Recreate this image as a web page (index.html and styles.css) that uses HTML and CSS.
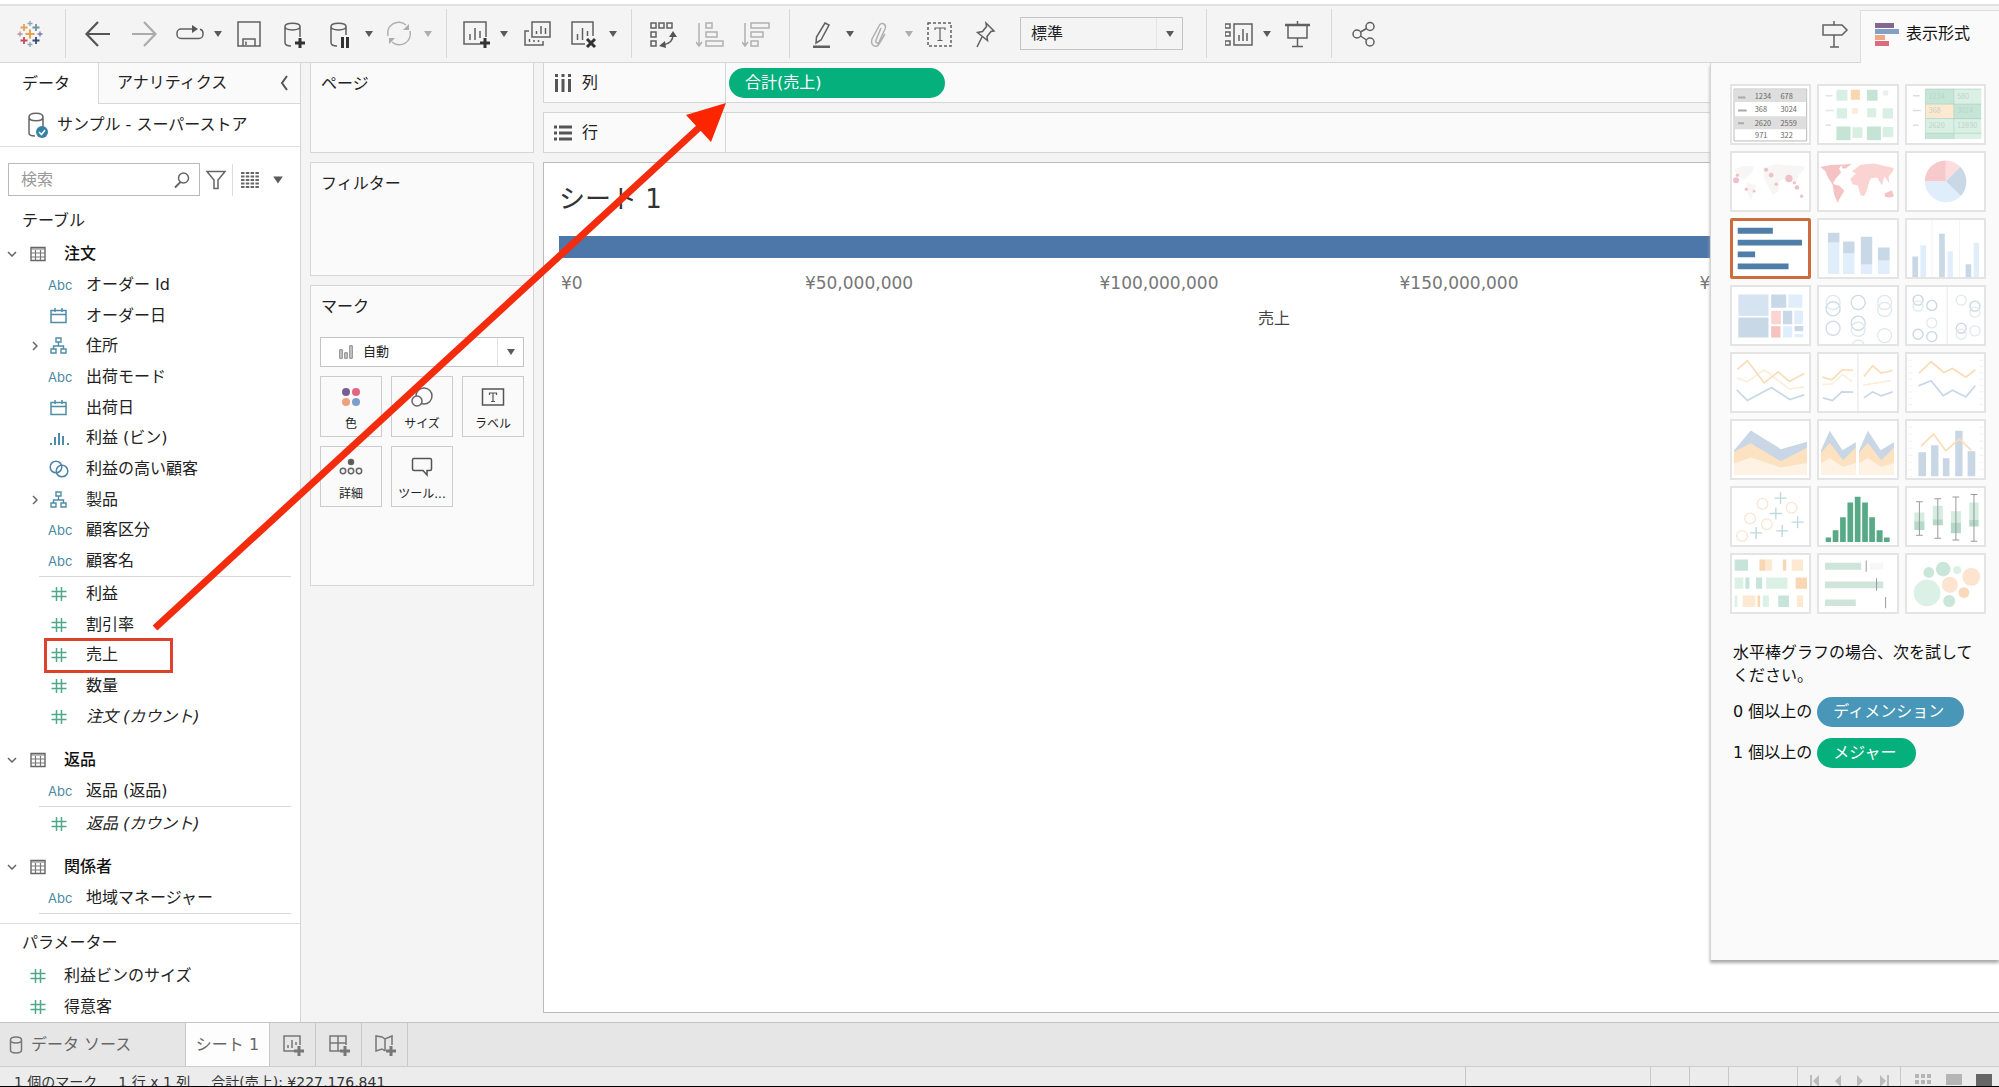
FILE: index.html
```html
<!DOCTYPE html>
<html lang="ja">
<head>
<meta charset="utf-8">
<title>シート 1</title>
<link rel="stylesheet" href="styles.css">
</head>
<body>
<svg class="defs" width="0" height="0" aria-hidden="true">
  <symbol id="i-cal" viewBox="0 0 20 20"><path d="M2 4.500h15v12H2zM2 8.500h15M6 2v4M13 2v4" fill="none" stroke="#4f8da6" stroke-width="1.500"/></symbol>
  <symbol id="i-hier" viewBox="0 0 20 20"><path d="M7 2h5v4H7zM2 13h5v4H2zM12 13h5v4h-5zM9.500 6v4M4.500 13v-3h10v3" fill="none" stroke="#4f8da6" stroke-width="1.400"/></symbol>
  <symbol id="i-bin" viewBox="0 0 20 20"><path d="M1 15h2v2H1zM5 9h2v8H5zM9 5h2v12H9zM13 8h2v9h-2zM18 15h2v2h-2z" fill="#4f8da6"/></symbol>
  <symbol id="i-set" viewBox="0 0 20 20"><g fill="none" stroke="#4f84a8" stroke-width="1.500"><circle cx="7" cy="8" r="5.800"/><circle cx="13" cy="12" r="5.800"/></g></symbol>
  <symbol id="i-num" viewBox="0 0 20 20"><path d="M7.500 3v14M12.500 3v14M2.500 7.500h15M2.500 12.500h15" fill="none" stroke="#4fa88a" stroke-width="1.500"/></symbol>
  <symbol id="i-table" viewBox="0 0 16 16"><path d="M1 1.500h14v13H1z" fill="#fff" stroke="#666" stroke-width="1.400"/><path d="M1 3h14M1 7h14M1 11h14M5.500 4v10M10.500 4v10" stroke="#777" stroke-width="1.200"/></symbol>
  <symbol id="i-down" viewBox="0 0 10 6"><path d="M1 1l4 4 4-4" fill="none" stroke="#666" stroke-width="1.500"/></symbol>
  <symbol id="i-right" viewBox="0 0 6 10"><path d="M1 1l4 4-4 4" fill="none" stroke="#666" stroke-width="1.500"/></symbol>
  <symbol id="i-caret" viewBox="0 0 10 6"><path d="M1 0h8L5 6z" fill="#5a5a5a"/></symbol>
</svg>

<div class="app">
<header class="toolbar">
  <div class="group logo">
    <svg width="26" height="28" viewBox="0 0 26 28" fill="none"><path d="M13 9.500v9M8.500 14h9" stroke="#e8a04c" stroke-width="2"/><path d="M7 4v7M3.500 7.500h7" stroke="#e0a35c" stroke-width="1.800"/><path d="M19 4v7M15.500 7.500h7" stroke="#6f94a8" stroke-width="1.800"/><path d="M7 17v7M3.500 20.500h7" stroke="#c94a57" stroke-width="1.800"/><path d="M19 17v7M15.500 20.500h7" stroke="#34497c" stroke-width="1.800"/><path d="M13 1v5M10.500 3.500h5M13 22v5M10.500 24.500h5" stroke="#8fa3b5" stroke-width="1.300"/><path d="M3 11.500v5M.5 14h5" stroke="#b290a8" stroke-width="1.300"/><path d="M23 11.500v5M20.500 14h5" stroke="#7779ad" stroke-width="1.300"/></svg>
  </div>
  <div class="group">
    <button class="tool" aria-label="戻る"><svg viewBox="0 0 28 28"><path d="M2 14h24M14 2L2.500 14 14 26" stroke="#555" stroke-width="2.200"/></svg></button>
    <button class="tool off" aria-label="進む"><svg viewBox="0 0 28 28"><path d="M2 14h24M14 2l11.500 12L14 26" stroke="#555" stroke-width="2.200"/></svg></button>
    <button class="tool menu" aria-label="再実行"><svg viewBox="0 0 28 28"><path d="M17 9H5a4 4 0 0 0-4 4v1.500a4 4 0 0 0 4 4h18a4 4 0 0 0 4-4V13a4 4 0 0 0-3-3.800"/><path d="M16 5l6 4-6 4z" fill="#555" stroke="none"/></svg><svg class="caret"><use href="#i-caret"/></svg></button>
    <button class="tool" aria-label="保存"><svg viewBox="0 0 28 28"><path d="M3 2h22v24H3zM8 26v-7h12v7M11 25v-3.500"/></svg></button>
    <button class="tool" aria-label="新しいデータ ソース"><svg viewBox="0 0 28 28"><path d="M4 6.500v16c0 2 2 3.500 6 3.500M4 6.500C4 2 19 2 19 6.500S4 11 4 6.500M19 6.500V17"/><path d="M19 18v10M14 23h10" stroke="#333" stroke-width="3"/></svg></button>
    <button class="tool menu" aria-label="自動更新の一時停止"><svg viewBox="0 0 28 28"><path d="M4 6.500v16c0 2 2 3.500 6 3.500M4 6.500C4 2 19 2 19 6.500S4 11 4 6.500M19 6.500V15"/><path d="M15.500 17v11M20.500 17v11" stroke="#333" stroke-width="3"/></svg><svg class="caret"><use href="#i-caret"/></svg></button>
    <button class="tool menu off" aria-label="更新"><svg viewBox="0 0 28 28"><path d="M2 16A11 11 0 0 1 20 5M24 11a11 11 0 0 1-18 11"/><path d="M23 4v6h-6zM3 24v-6h6z" fill="#555" stroke="none"/></svg><svg class="caret"><use href="#i-caret"/></svg></button>
  </div>
  <div class="group sheets">
    <button class="tool menu" aria-label="新しいワークシート"><svg viewBox="0 0 28 28"><path d="M18 24H2V2h22v15M8 20v-6M13 20V8M18 18v-7"/><path d="M23 18v10M18 23h10" stroke="#333" stroke-width="3"/></svg><svg class="caret"><use href="#i-caret"/></svg></button>
    <button class="tool" aria-label="複製"><svg viewBox="0 0 28 28"><path d="M9 2h18v15H9zM13.500 14v-3M18 14V6M22.500 14V8M6 11H2v14h18v-4M6.500 22v-3M11 22v-2M15.500 22v-2"/></svg></button>
    <button class="tool menu" aria-label="シートのクリア"><svg viewBox="0 0 28 28"><path d="M14 24H1V2h21v14M6.500 20v-6M11.500 20V8M16.500 16v-5"/><path d="M16 19l8 8M24 19l-8 8" stroke="#333" stroke-width="3"/></svg><svg class="caret"><use href="#i-caret"/></svg></button>
  </div>
  <div class="group">
    <button class="tool" aria-label="行と列の交換"><svg viewBox="0 0 28 28"><path d="M1 3h5v5H1zM9 3h5v5H9zM17 3h5v5h-5zM1 12h5v5H1zM1 21h5v5H1zM23 15c0 6-4 9-10 10"/><path d="M19 17l4-6 4 6zM15 21l-6 5 7 2z" fill="#555" stroke="none"/></svg></button>
    <button class="tool off" aria-label="昇順"><svg viewBox="0 0 28 28"><path d="M3 3v22M0 22l3 4 3-4M10 3h6v5h-6zM10 12h11v5H10zM10 21h17v5H10z"/></svg></button>
    <button class="tool off" aria-label="降順"><svg viewBox="0 0 28 28"><path d="M3 3v22M0 22l3 4 3-4M9 3h18v5H9zM9 12h12v5H9zM9 21h7v5H9z"/></svg></button>
  </div>
  <div class="group format">
    <button class="tool menu" aria-label="ハイライト"><svg viewBox="0 0 28 28"><path d="M17 3l4 2-8 15-5 3 .5-6z"/><path d="M5 27h17" stroke-width="3"/></svg><svg class="caret"><use href="#i-caret"/></svg></button>
    <button class="tool menu off" aria-label="グループ"><svg viewBox="0 0 28 28"><path d="M14 8L9 20c-1 3 2 4 3 2l6-13c2-5-4-8-6-3L5 19c-2 6 4 10 7 5l6-10"/></svg><svg class="caret"><use href="#i-caret"/></svg></button>
    <button class="tool" aria-label="マーク ラベル"><svg viewBox="0 0 28 28"><path d="M2 3h23v23H2z" stroke-dasharray="3 2"/><path d="M9 10V8h10v2M14 8v12M11.500 20.500h5" stroke-width="1.200"/></svg></button>
    <button class="tool" aria-label="固定"><svg viewBox="0 0 28 28"><path d="M14 3l8 8-3 .5-4 5 .500 4-10-8 5-1 4-5zM10 17l-5 10"/></svg></button>
    <label class="combo"><select aria-label="ビューのサイズ"><option>標準</option></select><span><svg class="caret"><use href="#i-caret"/></svg></span></label>
  </div>
  <div class="group">
    <button class="tool menu" aria-label="カードの表示"><svg viewBox="0 0 28 28"><path d="M0 4h5v4H0zM0 12h5v4H0zM0 21h5v4H0zM9 4h18v21H9zM14 21v-6M18 21V9M22 21v-8"/></svg><svg class="caret"><use href="#i-caret"/></svg></button>
    <button class="tool" aria-label="プレゼンテーション モード"><svg viewBox="0 0 28 28"><path d="M1 5h25" stroke-width="2.500"/><path d="M4 5v13h19V5M13.500 1v4M13.500 18v8M8 26.500h11"/></svg></button>
  </div>
  <div class="group">
    <button class="tool" aria-label="共有"><svg viewBox="0 0 28 28"><circle cx="7" cy="14" r="4"/><circle cx="20" cy="6.500" r="4"/><circle cx="20" cy="22" r="4"/><path d="M10.500 12L16.500 8.500M10.500 16l6 4"/></svg></button>
  </div>
  <div class="toolbar-end">
    <button class="tool" aria-label="データ ガイド"><svg viewBox="0 0 28 28"><path d="M2 5h19l5 5-5 5H2zM13 1v4M13 15v12M9 27h9"/></svg></button>
    <button class="showme-tab"><svg width="24" height="24" viewBox="0 0 24 24"><path d="M0 1h19v5H0z" fill="#84688f"/><path d="M0 7h24v5H0z" fill="#82a0c6"/><path d="M0 13h10v5H0z" fill="#eda883"/><path d="M0 19h14v5H0z" fill="#dd6b7d"/></svg>表示形式</button>
  </div>
</header>

<main class="work">
  <aside class="side">
    <div class="side-tabs"><button class="on">データ</button><button>アナリティクス<svg width="9" height="16" viewBox="0 0 9 16"><path d="M7 1L2 8l5 7" fill="none" stroke="#555" stroke-width="2"/></svg></button></div>
    <a class="source" href="#"><svg width="22" height="28" viewBox="0 0 22 28"><path d="M2 6v16c0 2 3 3 6 3M2 6c0-5 14-5 14 0S2 11 2 6M16 6v10" fill="none" stroke="#666" stroke-width="1.500"/><circle cx="15" cy="21" r="6" fill="#3682a5"/><path d="M12 21l2.500 2.500L18 19" fill="none" stroke="#fff" stroke-width="1.500"/></svg>サンプル - スーパーストア</a>
    <div class="search">
      <label class="searchbox"><input type="text" placeholder="検索" aria-label="検索"><svg width="16" height="18" viewBox="0 0 16 18"><path d="M6.500 11L1 16.500" stroke="#666" stroke-width="2"/><circle cx="9.500" cy="7" r="5" fill="none" stroke="#666" stroke-width="1.500"/></svg></label>
      <button aria-label="フィルター"><svg width="20" height="20" viewBox="0 0 20 20"><path d="M1 1.500h18L12 10v8.500H8V10z" fill="none" stroke="#666" stroke-width="1.500"/></svg></button>
      <button class="view" aria-label="表示"><svg width="18" height="16" viewBox="0 0 18 16"><path d="M0 1h18M0 4.500h18M0 8h18M0 11.500h18M0 15h18" stroke="#666" stroke-width="2" stroke-dasharray="3.500 1.300"/></svg><svg class="caret big"><use href="#i-caret"/></svg></button>
    </div>
    <h2>テーブル</h2>
    <section class="table-group">
      <h3><svg class="chev"><use href="#i-down"/></svg><svg class="ticon"><use href="#i-table"/></svg>注文</h3>
      <ul>
        <li><span class="abc">Abc</span>オーダー Id</li>
        <li><svg><use href="#i-cal"/></svg>オーダー日</li>
        <li class="tree"><svg class="exp"><use href="#i-right"/></svg><svg><use href="#i-hier"/></svg>住所</li>
        <li><span class="abc">Abc</span>出荷モード</li>
        <li><svg><use href="#i-cal"/></svg>出荷日</li>
        <li><svg><use href="#i-bin"/></svg>利益 (ビン)</li>
        <li><svg><use href="#i-set"/></svg>利益の高い顧客</li>
        <li class="tree"><svg class="exp"><use href="#i-right"/></svg><svg><use href="#i-hier"/></svg>製品</li>
        <li><span class="abc">Abc</span>顧客区分</li>
        <li><span class="abc">Abc</span>顧客名</li>
      </ul>
      <ul class="measures">
        <li><svg><use href="#i-num"/></svg>利益</li>
        <li><svg><use href="#i-num"/></svg>割引率</li>
        <li class="marked"><svg><use href="#i-num"/></svg>売上</li>
        <li><svg><use href="#i-num"/></svg>数量</li>
        <li><svg><use href="#i-num"/></svg><i>注文 (カウント)</i></li>
      </ul>
    </section>
    <section class="table-group">
      <h3><svg class="chev"><use href="#i-down"/></svg><svg class="ticon"><use href="#i-table"/></svg>返品</h3>
      <ul><li><span class="abc">Abc</span>返品 (返品)</li></ul>
      <ul class="measures"><li><svg><use href="#i-num"/></svg><i>返品 (カウント)</i></li></ul>
    </section>
    <section class="table-group last">
      <h3><svg class="chev"><use href="#i-down"/></svg><svg class="ticon"><use href="#i-table"/></svg>関係者</h3>
      <ul><li><span class="abc">Abc</span>地域マネージャー</li></ul>
      <ul class="measures"></ul>
    </section>
    <section class="params">
      <h2>パラメーター</h2>
      <ul>
        <li><svg><use href="#i-num"/></svg>利益ビンのサイズ</li>
        <li><svg><use href="#i-num"/></svg>得意客</li>
      </ul>
    </section>
  </aside>

  <div class="cards">
    <section class="card pages"><h2>ページ</h2></section>
    <section class="card filters"><h2>フィルター</h2></section>
    <section class="card marks"><h2>マーク</h2>
      <label class="combo mark-type"><svg width="14" height="14" viewBox="0 0 14 14"><path d="M.7 4.700h2.600v8.600H.700zM5.700 7.700h2.600v5.600H5.700zM10.700.700h2.600v12.600h-2.600z" fill="#ccc" stroke="#888"/></svg><select aria-label="マークの種類"><option>自動</option></select><span><svg class="caret"><use href="#i-caret"/></svg></span></label>
      <div class="mark-grid">
        <button><svg viewBox="0 0 24 20"><circle cx="7" cy="5" r="4" fill="#75608f"/><circle cx="17" cy="5" r="4" fill="#e3657f"/><circle cx="7" cy="15" r="4" fill="#eda17c"/><circle cx="17" cy="15" r="4" fill="#7c9fc9"/></svg>色</button>
        <button><svg viewBox="0 0 24 20" fill="none" stroke="#666" stroke-width="1.500"><circle cx="14" cy="9" r="8"/><circle cx="7" cy="14" r="5" fill="#fafafa"/></svg>サイズ</button>
        <button><svg viewBox="0 0 24 20" fill="none" stroke="#555" stroke-width="1.500"><path d="M1.500 2h21v16h-21z"/><path d="M8.500 8V6h7v2M12 6v8.500M10 14.500h4" stroke-width="1.200"/></svg>ラベル</button>
        <button><svg viewBox="0 0 24 20" fill="none" stroke="#666" stroke-width="1.500"><circle cx="12" cy="5" r="2.500" fill="#555"/><circle cx="4" cy="14" r="2.700"/><circle cx="12" cy="14" r="2.700"/><circle cx="20" cy="14" r="2.700"/></svg>詳細</button>
        <button><svg viewBox="0 0 24 20" fill="none" stroke="#555" stroke-width="1.500"><path d="M4 1.500h16q1.500 0 1.500 1.500v9q0 1.500-1.500 1.500h-3V18l-4-4.500H4q-1.500 0-1.500-1.500V3Q2.500 1.500 4 1.500z"/></svg>ツール...</button>
      </div>
    </section>
  </div>

  <div class="canvas">
    <div class="shelf"><div class="shelf-name"><svg width="18" height="18" viewBox="0 0 18 18"><path d="M2.500 0v3M9 0v3M15.500 0v3M2.500 5v13M9 5v13M15.500 5v13" stroke="#555" stroke-width="3"/></svg>列</div><button class="pill measure">合計(売上)</button></div>
    <div class="shelf"><div class="shelf-name"><svg width="18" height="18" viewBox="0 0 18 18"><path d="M0 3h3M0 9h3M0 15h3M5 3h13M5 9h13M5 15h13" stroke="#555" stroke-width="3"/></svg>行</div></div>
    <section class="sheet">
      <h1>シート 1</h1>
      <div class="bar"></div>
      <div class="axis"><span>¥0</span><span>¥50,000,000</span><span>¥100,000,000</span><span>¥150,000,000</span><span>¥200,000,000</span></div>
      <p class="axis-title">売上</p>
    </section>
  </div>

  <aside class="showme">
    <div class="tiles">
      <button aria-label="テキスト表"><svg viewBox="0 0 243 180"><path d="M12 14h217v155H12z" fill="#fff" stroke="#999" stroke-width="2"/><path d="M13 15h215v38H13zM13 95h215v39H13z" fill="#dedede"/><path d="M24 39h22M24 78h26M24 116h18" stroke="#aaa" stroke-width="6"/><g class="t"><text x="74" y="45">1234</text><text x="151" y="45">678</text><text x="74" y="84">368</text><text x="151" y="84">3024</text><text x="74" y="123">2620</text><text x="151" y="123">2559</text><text x="75" y="159">971</text><text x="151" y="159">322</text></g></svg></button>
      <button aria-label="ヒート マップ"><svg viewBox="0 0 243 180"><path d="M26 34h20M26 78h24M26 122h16" stroke="#e4e4e4" stroke-width="5"/><path d="M58 16h33v33H58zM59 71h31v31H59zM150 71h27v27h-27zM196 71h31v31h-31zM106 128h30v32h-30zM196 127h32v31h-32z" fill="#d8efe3"/><path d="M149 16h32v33h-32zM58 126h42v41H58zM149 126h42v41h-42z" fill="#c5e4d6"/><path d="M101 16h27v30h-27z" fill="#fad6b0"/><path d="M104 71h18v17h-18z" fill="#fdebd9"/><path d="M197 18h16v15h-16z" fill="#eee"/></svg></button>
      <button aria-label="ハイライト表"><svg viewBox="0 0 243 180"><path d="M24 34h20M24 78h24M24 122h16" stroke="#ddd" stroke-width="5"/><path d="M61 14h167v149H61z" fill="#daf0e5"/><path d="M61 14h85v45H61zM146 59h81v45h-81zM61 146h85v17H61z" fill="#c5e5d7"/><path d="M61 59h85v42H61z" fill="#fee8d0"/><path d="M61 14h167M61 59h167M61 102h167M61 146h167M61 14v149M146 14v149" stroke="#aed2c3" stroke-width="2" fill="none"/><g class="t pale"><text x="70" y="44">1234</text><text x="155" y="44">580</text><text x="70" y="86">368</text><text x="155" y="86">3024</text><text x="70" y="130">2620</text><text x="155" y="130">12890</text></g></svg></button>
      <button aria-label="記号マップ"><svg viewBox="0 0 243 180"><path d="M12 55l30-12 30 2-6 18-22 20-16-6zM50 92l28 10-16 44-10-20zM98 50l40-12 88 8-20 26-10 26-20-18-26 6-6 34-16 10-24-44z" fill="#f8f5f5"/><g fill="#efc0c8"><circle cx="18" cy="86" r="9"/><circle cx="22" cy="71" r="5"/><circle cx="49" cy="113" r="5"/><circle cx="72" cy="119" r="4"/><circle cx="108" cy="55" r="6"/><circle cx="123" cy="71" r="7"/><circle cx="138" cy="98" r="5"/><circle cx="176" cy="81" r="11"/><circle cx="192" cy="94" r="5"/><circle cx="200" cy="108" r="7"/><circle cx="214" cy="134" r="5"/></g></svg></button>
      <button aria-label="マップ"><svg viewBox="0 0 243 180"><path d="M10 47l30-6 34-2-8 12 6 12-16 18-8 14 14 9-12 0-16-24-10-22zM72 40l32-3-18 14-10 0zM46 98l20 4 16 16-16 26-4 10-10-22z" fill="#f5c3c3"/><path d="M104 60l26-20 40-4 60 14-4 10-12 16 2 20-14-22-8 28-14-24-18 2-6 10-8 30-8 14-10-4-8-28-16-4-6-16 16-16z" fill="#fbd3d3"/><path d="M202 126l22-10 6 18-12 4-14-2z" fill="#f5c3c3"/></svg></button>
      <button aria-label="円グラフ"><svg viewBox="0 0 243 180"><path d="M122 90H59a63 63 0 0 1 63-63z" fill="#f6caca"/><path d="M122 90V27a63 63 0 0 1 43 19z" fill="#fcdcdc"/><path d="M122 90l43-44a63 63 0 0 1 2 87z" fill="#c9d8e6"/><path d="M122 90l45 43A63 63 0 0 1 59 90z" fill="#e0eefb"/></svg></button>
      <button class="sel" aria-label="水平棒"><svg viewBox="0 0 243 180"><path d="M23 28h105v18H23zM23 64h192v17H23zM23 99h52v17H23zM23 135h152v17H23z" fill="#4f7fa8"/></svg></button>
      <button aria-label="積み上げ棒"><svg viewBox="0 0 243 180"><path d="M33 72h34v94H33zM78 104h34v62H78zM131 138h34v28h-34zM182 126h35v40h-35z" fill="#e0eefb"/><path d="M33 43h34v29H33zM78 69h34v35H78zM131 55h34v83h-34zM182 87h35v39h-35z" fill="#c9d8e6"/></svg></button>
      <button aria-label="並列棒"><svg viewBox="0 0 243 180"><path d="M81 2v176M163 2v176" stroke="#eee" stroke-width="2"/><path d="M46 80h17v98H46zM127 98h16v80h-16zM205 73h16v105h-16z" fill="#e0eefb"/><path d="M22 114h17v64H22zM102 46h17v132h-17zM181 137h17v41h-17z" fill="#c9d8e6"/></svg></button>
      <button aria-label="ツリーマップ"><svg viewBox="0 0 243 180"><path d="M25 27h90v64H25z" fill="#d6e3f1"/><path d="M25 96h90v60H25zM123 27h45v40h-45zM158 76h28v40h-28zM193 121h26v16h-26z" fill="#c9d8e6"/><path d="M174 27h42v40h-42zM192 76h26v40h-26zM158 122h28v34h-28zM193 145h26v10h-26z" fill="#e0eefb"/><path d="M123 76h29v40h-29z" fill="#fcd4d1"/><path d="M123 122h28v34h-28z" fill="#f5c3c0"/></svg></button>
      <button aria-label="円ビュー"><svg viewBox="0 0 243 180" class="rings"><g stroke="#cddbe4"><circle cx="48" cy="70" r="21"/><circle cx="48" cy="128" r="21"/><circle cx="123" cy="51" r="21"/><circle cx="123" cy="113" r="21"/></g><g stroke="#dfe8ee"><circle cx="48" cy="51" r="21"/><circle cx="123" cy="131" r="21"/><circle cx="202" cy="51" r="21"/><circle cx="202" cy="72" r="21"/><circle cx="202" cy="150" r="21"/><path d="M106 176a17 12 0 0 1 34 0"/></g></svg></button>
      <button aria-label="並列円"><svg viewBox="0 0 243 180" class="rings"><path d="M126 2v176" stroke="#eee"/><g stroke="#c8d8e2"><circle cx="80" cy="60" r="15"/><circle cx="80" cy="153" r="15"/><circle cx="209" cy="62" r="15"/><circle cx="39" cy="146" r="15"/><circle cx="168" cy="128" r="15"/><circle cx="39" cy="44" r="15"/></g><g stroke="#e2eaee"><circle cx="39" cy="62" r="15"/><circle cx="80" cy="112" r="15"/><circle cx="168" cy="44" r="15"/><circle cx="209" cy="80" r="15"/><circle cx="168" cy="146" r="15"/><circle cx="209" cy="136" r="15"/></g></svg></button>
      <button aria-label="線 (連続)"><svg viewBox="0 0 243 180" class="lines"><path d="M20 76l32 12 50-36 76 58 44-7" stroke="#fdeedb"/><path d="M22 51l30-26 50 66 42-33 33 29 45-24" stroke="#fadcb8"/><path d="M20 112l32 32 72-39 54 36 44-14" stroke="#c8d8e8"/></svg></button>
      <button aria-label="線 (不連続)"><svg viewBox="0 0 243 180" class="lines"><path d="M122 2v176" stroke="#eee"/><path d="M16 96l30-2 30-28 30 22M138 98l84-14" stroke="#fdeedb"/><path d="M16 74l28 8 32-30 32 2M140 72l26-32 26 22 34-8" stroke="#fadcb8"/><path d="M18 136l28 8 28-26 34 1M140 136l26-18 26 12 34-12" stroke="#c8d8e8"/></svg></button>
      <button aria-label="二重線"><svg viewBox="0 0 243 180" class="lines"><path d="M16 22v150M228 22v150" stroke="#ececec" stroke-width="12" stroke-dasharray="2 17"/><path d="M42 62l36-34 38 32 26-12 40 26 28-22" stroke="#fadcb8"/><path d="M40 100l38-15 36 44 28-16 40 20 28-34" stroke="#c8d8e8"/></svg></button>
      <button aria-label="面グラフ (連続)"><svg viewBox="0 0 243 180"><path d="M12 93l50-60 90 56 78-22v99H12z" fill="#c9d6e5"/><path d="M12 97l50-26 90 54 78-40v81H12z" fill="#fce2c1"/><path d="M12 132l50-18 90 30 78-14v36H12z" fill="#fef2e4"/></svg></button>
      <button aria-label="面グラフ (不連続)"><svg viewBox="0 0 243 180"><path d="M12 92l26-58 38 58 40-24v98H12zM126 92l26-58 38 58 40-24v98H126z" fill="#c9d6e5"/><path d="M12 100l26-30 40 52 38-38v82H12zM126 100l26-30 40 52 38-38v82H126z" fill="#fce2c1"/><path d="M12 130l26-14 40 26 38-12v36H12zM126 130l26-14 40 26 38-12v36H126z" fill="#fef2e4"/></svg></button>
      <button aria-label="二重の組み合わせ"><svg viewBox="0 0 243 180" class="lines"><path d="M16 22v150M228 22v150" stroke="#ececec" stroke-width="12" stroke-dasharray="2 19"/><path d="M40 98h23v72H40zM78 77h22v93H78zM113 116h20v54h-20zM150 34h22v136h-22zM187 95h23v75h-23z" fill="#c9d6e5"/><path d="M48 80l37-36 37 50 40-36 36 34" stroke="#fadcb8"/></svg></button>
      <button aria-label="散布図"><svg viewBox="0 0 243 180" class="rings"><g stroke="#f8e7d4"><circle cx="97" cy="52" r="16"/><circle cx="184" cy="64" r="16"/><circle cx="60" cy="96" r="16"/><circle cx="110" cy="113" r="16"/><circle cx="36" cy="148" r="16"/></g><path d="M151 17v36M133 35h36M137 63v36M119 81h36M202 89v36M184 107h36M78 121v36M60 139h36M156 115v36M138 133h36" stroke="#bed9dc"/></svg></button>
      <button aria-label="ヒストグラム"><svg viewBox="0 0 243 180"><path d="M26 153h16v13H26zM47 131h17v35H47zM69 92h17v74H69zM91 48h17v118H91zM113 31h17v135h-17zM135 48h17v118h-17zM156 92h17v74h-17zM178 131h18v35h-18zM200 153h17v13h-17z" fill="#58aa87"/></svg></button>
      <button aria-label="箱ヒゲ図"><svg viewBox="0 0 243 180"><path d="M28 78h30v26H28zM83 58h30v40H83zM137 74h30v34h-30zM192 48h28v52h-28z" fill="#d5ece1"/><path d="M28 104h30v26H28zM83 98h30v18H83zM137 108h30v32h-30zM192 100h28v20h-28z" fill="#b4d9c8"/><path d="M43 46v100M33 46h20M33 146h20M98 37v118M88 37h20M88 155h20M152 32v128M142 32h20M142 160h20M206 24v140M196 24h20M196 164h20" stroke="#9a9a9a" stroke-width="3"/></svg></button>
      <button aria-label="ガント"><svg viewBox="0 0 243 180"><path d="M14 18h40v34H14zM78 72h18v34H78zM144 126h32v34h-32zM46 72h12v34H46z" fill="#c6e4da"/><path d="M14 72h26v34H14zM108 72h64v34h-64zM98 126h18v34H98zM14 126h8v34h-8z" fill="#dcf1e6"/><path d="M106 18h20v34h-20zM184 18h34v34h-34zM38 126h38v34H38zM200 126h18v34h-18z" fill="#fde8d1"/><path d="M88 18h18v34H88zM158 18h10v34h-10zM196 72h34v34h-34zM82 126h8v34h-8z" fill="#f9d7b4"/></svg></button>
      <button aria-label="ブレット グラフ"><svg viewBox="0 0 243 180"><path d="M24 28h108v21H24zM24 84h174v20H24zM24 138h92v19H24z" fill="#cfe5db"/><path d="M158 28h40v21h-40z" fill="#f7f7f7"/><path d="M147 21v34M178 74v38M205 130v34" stroke="#999" stroke-width="3"/></svg></button>
      <button aria-label="パック バブル"><svg viewBox="0 0 243 180"><g fill="#c9e6d8"><circle cx="71" cy="57" r="16"/><circle cx="114" cy="47" r="22"/><circle cx="132" cy="142" r="18"/></g><g fill="#dcf1e6"><circle cx="66" cy="118" r="40"/><circle cx="156" cy="50" r="12"/></g><g fill="#fde4cf"><circle cx="134" cy="94" r="24"/><circle cx="198" cy="70" r="27"/></g><circle cx="176" cy="117" r="16" fill="#fad8ba"/></svg></button>
    </div>
    <div class="hint">
      <p>水平棒グラフの場合、次を試してください。</p>
      <div>0 個以上の<span class="pill dimension">ディメンション</span></div>
      <div>1 個以上の<span class="pill measure">メジャー</span></div>
    </div>
  </aside>
</main>

<nav class="sheet-tabs">
  <button class="ds"><svg width="14" height="18" viewBox="0 0 14 18"><path d="M1.500 4v10c0 4 11 4 11 0V4c0-4-11-4-11 0s11 4 11 0" fill="none" stroke="#777" stroke-width="1.500"/></svg>データ ソース</button>
  <button class="on">シート 1</button>
  <button class="new" aria-label="新しいワークシート"><svg viewBox="0 0 22 22"><path d="M12 17H2V2h16v9M6 14v-3M10 14V6M14 11V8" /><path d="M17 12v10M12 17h10" stroke-width="3"/></svg></button>
  <button class="new" aria-label="新しいダッシュボード"><svg viewBox="0 0 22 22"><path d="M12 17H2V2h16v9M2 9h16M10 2v15"/><path d="M17 12v10M12 17h10" stroke-width="3"/></svg></button>
  <button class="new" aria-label="新しいストーリー"><svg viewBox="0 0 22 22"><path d="M11 17l-3-2-6 2V2l6 1 3 2 7-3v9M11 5v12"/><path d="M17 12v10M12 17h10" stroke-width="3"/></svg></button>
</nav>
<footer class="status">
  <span>1 個のマーク</span><span>1 行 x 1 列</span><span>合計(売上): ¥227,176,841</span>
  <div class="cells">
    <i class="c1"></i><i class="c2"></i><i class="c2"></i><i class="c3"></i>
    <div class="nav"><svg width="80" height="14" viewBox="0 0 80 14"><path d="M0 1h2v12H0zM9 1v12L3 7zM31 1v12l-6-6zM47 1v12l6-6zM77 1h2v12h-2zM70 1v12l6-6z" fill="#bbb"/></svg></div>
    <div class="modes"><svg width="80" height="16" viewBox="0 0 80 16"><path d="M2 0h4v4H2zM8 0h4v4H8zM14 0h4v4h-4zM2 6h4v4H2zM8 6h4v4H8zM14 6h4v4h-4zM33 0h16v11H33z" fill="#b5b5b5"/><path d="M63 0h16v16H63z" fill="#666"/></svg></div>
  </div>
</footer>

<svg class="drag-arrow" width="600" height="560" viewBox="140 90 600 560"><path d="M155 628L703 124" stroke="#f32c0e" stroke-width="7"/><path d="M726 103L686 115l25 27z" fill="#fb2500"/></svg>
</div>
</body>
</html>
```
FILE: styles.css
```css
*, *::after { box-sizing: border-box; margin: 0; padding: 0; }
body {
  font: 16px/24px "DejaVu Sans", "Noto Sans CJK JP", sans-serif;
  color: #222;
  background: #fff;
}
button, input, select { font: inherit; color: inherit; background: none; border: 0; appearance: none; }
button svg, a svg { flex: none; }
a { color: inherit; text-decoration: none; }
ul { list-style: none; }
h1, h2, h3 { font-size: 16px; font-weight: 400; }
.defs { position: absolute; }
.app { position: relative; display: flex; flex-direction: column; height: 100vh; overflow: hidden; }

/* toolbar */
.toolbar { display: flex; flex: none; height: 59px; margin-top: 4px; background: #f4f4f4; border-top: 2px solid #e2e2e2; border-bottom: 1px solid #d5d5d5; }
.group { display: flex; align-items: center; margin: 3px 0 4px; padding: 0 10px 0 9px; border-left: 1px solid #d8d8d8; }
.group.logo { width: 65px; padding-left: 17px; border: 0; }
.group.sheets { gap: 2px; padding-left: 6px; }
.group.format { padding-right: 23px; }
.tool { display: flex; align-items: center; gap: 9px; width: 46px; height: 40px; padding-left: 9px; }
.tool.menu { width: 59px; }
.tool svg { width: 28px; height: 28px; fill: none; stroke: #606060; stroke-width: 1.5px; }
.tool.off { opacity: .45; }
svg.caret { flex: none; width: 10px; height: 6px; stroke: none; }
.tool svg.caret { width: 10px; height: 6px; stroke: none; }
svg.caret.big { width: 12px; height: 8px; }
.combo { display: flex; align-items: stretch; width: 163px; height: 33px; margin-left: 11px; font-size: 16px; border: 1px solid #c4c4c4; }
.combo select { flex: 1; padding-left: 10px; }
.combo span { display: flex; align-items: center; justify-content: center; width: 26px; border-left: 1px solid #e4e4e4; }
.toolbar-end { display: flex; align-items: center; margin-left: auto; }
.toolbar-end .tool { margin-right: 2px; }
.showme-tab { display: flex; align-items: center; gap: 7px; align-self: flex-end; width: 139px; height: 53px; margin-bottom: -1px; padding: 0 0 6px 14px; color: #111; background: #fafafa; border: 1px solid #ddd; border-width: 1px 0 0 1px; }

.work { position: relative; display: flex; flex: 1; min-height: 0; background: #f4f4f4; }

/* data pane */
.side { flex: none; width: 301px; overflow: hidden; background: #fff; border-right: 1px solid #d5d5d5; }
.side-tabs { display: flex; height: 41px; }
.side-tabs button { display: flex; align-items: center; justify-content: space-between; flex: 1; padding: 0 11px 0 18px; background: #fafafa; border: 1px solid #d8d8d8; border-width: 0 0 1px 1px; }
.side-tabs .on { flex: none; width: 98px; padding: 0 22px; background: #fff; border: 0; }
.source { display: flex; align-items: center; gap: 8px; height: 43px; padding-left: 27px; border-bottom: 1px solid #e0e0e0; }
.search { display: flex; align-items: center; height: 33px; margin: 16px 0 12px 8px; }
.searchbox { display: flex; align-items: center; width: 192px; height: 33px; padding: 0 9px 0 12px; border: 1px solid #bbb; }
.searchbox input { flex: 1; min-width: 0; outline: 0; }
.searchbox input::placeholder { color: #999; }
.search button { display: flex; align-items: center; padding: 0 6px; height: 32px; }
.search .view { gap: 13px; padding-left: 8px; border-left: 1px solid #ddd; }
.side h2 { height: 31px; padding-left: 22px; line-height: 26px; }
.table-group { margin-bottom: 13px; }
.table-group h3 { display: flex; align-items: center; height: 30px; padding-left: 7px; font-weight: 500; color: #111; }
.chev { width: 10px; height: 6px; margin-right: 13px; }
.ticon { width: 16px; height: 16px; margin-right: 18px; }
.side li { display: flex; align-items: center; height: 31px; padding-left: 49px; gap: 17px; }
.side li:nth-child(3n) { height: 30px; }
.side li > svg { width: 20px; height: 20px; }
.side li > .exp { width: 6px; height: 10px; margin-right: -6px; }
.side li.tree { padding-left: 32px; }
.abc { width: 23px; margin: 0 -2px 0 -1px; font: 13px/20px Inter, sans-serif; color: #4a88a3; }
.measures { margin: 0 9px 0 39px; padding-top: 1px; border-top: 1px solid #d8d8d8; }
.side .measures li { padding-left: 10px; }
.side .marked { position: relative; }
.marked::after { content: ""; position: absolute; left: 5px; top: -2px; width: 129px; height: 35px; border: 3px solid #dc422c; }
.table-group.last { margin-bottom: 8px; }
.params { border-top: 1px solid #ddd; padding-top: 6px; }
.side .params h2 { height: 30px; }
.side .params li { padding-left: 28px; gap: 16px; }

/* cards */
.cards { flex: none; width: 224px; margin-left: 9px; }
.card { margin-bottom: 9px; padding: 9px; background: #fafafa; border: 1px solid #d5d5d5; }
.card h2 { padding-left: 1px; }
.pages { height: 90px; border-top: 0; }
.filters { height: 114px; }
.marks { height: 301px; }
.mark-type { width: 204px; height: 30px; align-items: center; margin: 18px 0 9px; background: #fff; font-size: 13px; }
.mark-type > svg { margin-left: 18px; }
.mark-type span { align-self: stretch; }
.mark-grid { display: grid; grid-template-columns: repeat(3, 62px); gap: 9px; }
.mark-grid button { display: flex; flex-direction: column; align-items: center; height: 61px; padding-top: 10px; gap: 7px; font-size: 12px; line-height: 20px; border: 1px solid #ccc; }
.mark-grid svg { width: 24px; height: 20px; }

/* shelves and sheet */
.canvas { flex: 1; min-width: 0; margin-left: 9px; display: flex; flex-direction: column; }
.shelf { display: flex; align-items: center; flex: none; height: 41px; margin-bottom: 9px; background: #fafafa; border: 1px solid #d5d5d5; border-right: 0; }
.shelf:first-child { height: 40px; border-top: 0; }
.shelf-name { display: flex; align-items: center; gap: 10px; align-self: stretch; width: 182px; padding-left: 10px; border-right: 1px solid #d5d5d5; }
.pill { display: inline-block; height: 30px; padding: 0 20px 0 16px; line-height: 29px; color: #fff; border-radius: 15px; }
.pill.measure { background: #05b07c; }
.pill.dimension { background: #4896b8; }
.shelf .pill { width: 216px; margin-left: 3px; text-align: left; }
.sheet { flex: 1; margin-bottom: 9px; padding: 18px 0 0 15px; overflow: hidden; background: #fff; border: 1px solid #bbb; border-right: 0; }
.sheet h1 { height: 55px; font-size: 26px; line-height: 36px; color: #333; }
.bar { height: 22px; background: #4d77a9; }
.axis { display: flex; height: 50px; padding-left: 2px; font-size: 17px; line-height: 50px; color: #777; }
.axis span { flex: none; width: 300px; text-align: center; }
.axis span:first-child { width: 148px; text-align: left; }
.axis-title { width: 1430px; max-width: 100%; text-align: center; line-height: 22px; color: #444; }

/* show me */
.showme { position: absolute; top: 0; right: 0; width: 289px; height: 897px; padding: 21px 13px 0 19px; background: #fafafa; border-left: 1px solid #d5d5d5; box-shadow: 0 3px 3px #aaa; }
.tiles { display: grid; grid-template-columns: repeat(3, 1fr); gap: 6px; }
.tiles button { display: flex; height: 61px; background: #fff; outline: 2px solid #e4e4e4; outline-offset: -2px; }
.tiles svg { width: 100%; height: 61px; }
.tiles .sel { outline: 3px solid #cd6c3d; outline-offset: -3px; border-radius: 2px; }
.t { font: 22px "Noto Sans CJK JP", sans-serif; fill: #666; }
.pale { fill: #bcd5c9; }
.rings { fill: none; stroke-width: 4px; }
.lines { fill: none; stroke-width: 5px; }
.hint { padding: 27px 0 0 3px; color: #111; }
.hint p { line-height: 23px; }
.hint div { display: flex; align-items: center; gap: 5px; height: 30px; margin-top: 11px; }
.hint p + div { margin-top: 10px; }

/* bottom bars */
.sheet-tabs { display: flex; flex: none; height: 45px; color: #666; background: #e6e6e6; border-top: 1px solid #c4c4c4; border-bottom: 1px solid #ccc; }
.sheet-tabs button { display: flex; align-items: center; justify-content: center; width: 46px; border-right: 1px solid #c8c8c8; }
.sheet-tabs .ds { width: 186px; justify-content: flex-start; gap: 8px; padding-left: 9px; }
.sheet-tabs .on { width: 84px; background: #fdfdfd; }
.new svg { width: 22px; height: 22px; fill: none; stroke: #777; stroke-width: 1.5px; }
.status { display: flex; flex: none; gap: 21px; height: 20px; padding-left: 14px; overflow: hidden; font-size: 14px; line-height: 30px; color: #333; background: #ececec; border-bottom: 1px solid #000; }
.cells { display: flex; margin-left: auto; }
.cells > * { border-left: 1px solid #c8c8c8; }
.c1 { width: 185px; }
.c2 { width: 39px; }
.c3 { width: 69px; }
.nav { width: 103px; padding: 7px 0 0 12px; line-height: 0; }
.modes { width: 99px; padding: 7px 0 0 12px; line-height: 0; }

.drag-arrow { position: absolute; left: 140px; top: 90px; pointer-events: none; }
```
